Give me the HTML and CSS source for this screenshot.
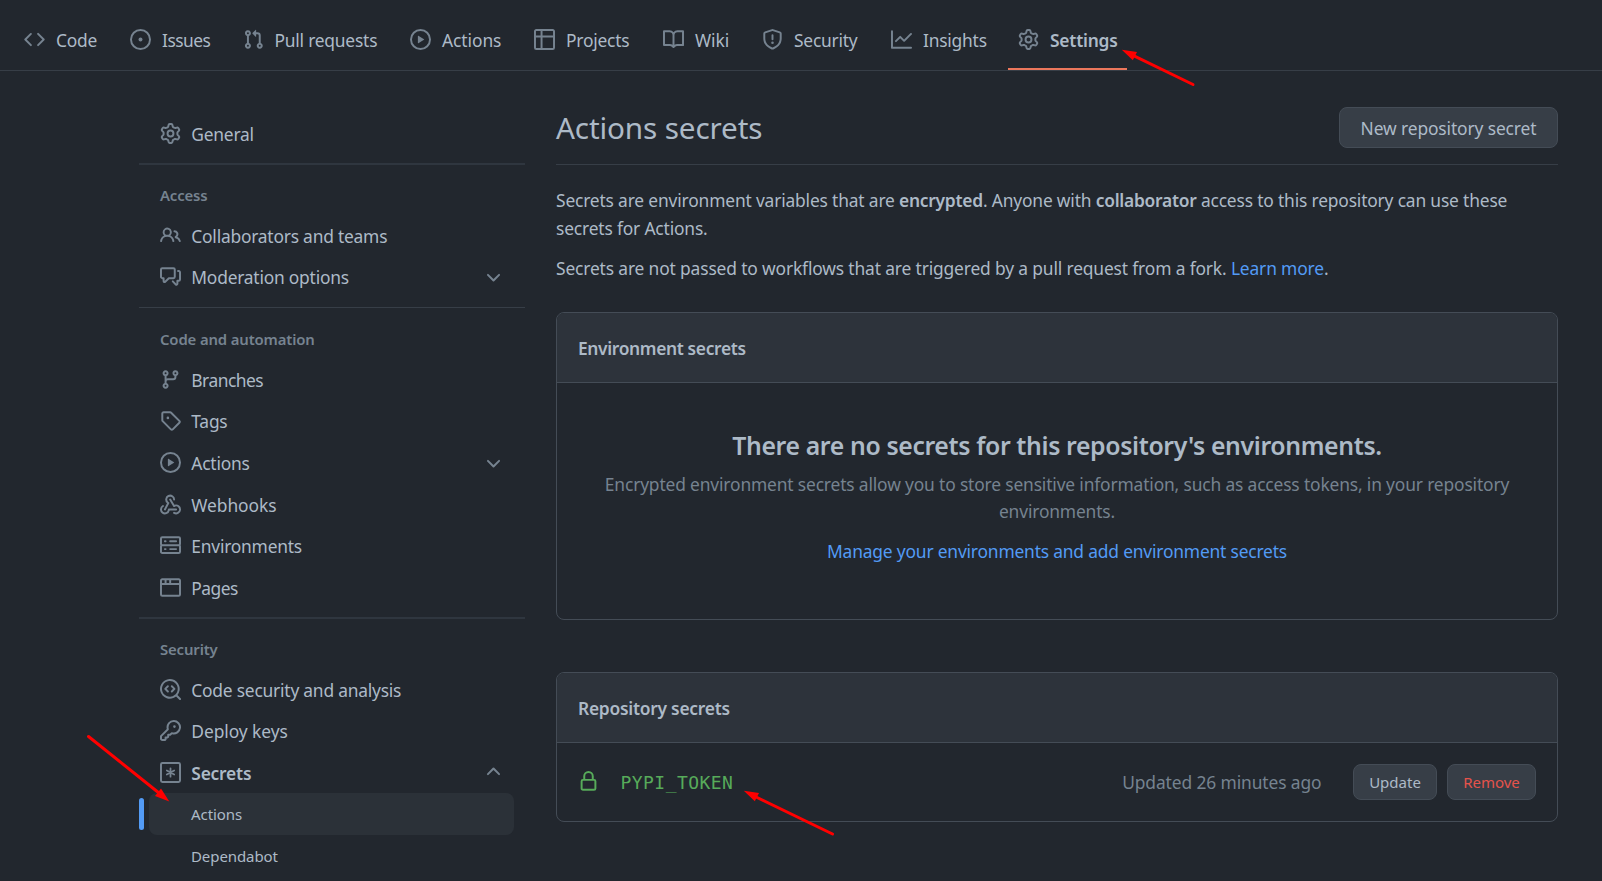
FILE: index.html
```html
<!DOCTYPE html>
<html lang="en">
<head>
<meta charset="utf-8">
<title>Actions secrets</title>
<link rel="stylesheet" href="styles.css">
</head>
<body>
<svg class="sprite" aria-hidden="true">
<symbol id="code" viewBox="0 0 16 16"><path d="M4.72 3.22a.75.75 0 011.06 1.06L2.06 8l3.72 3.72a.75.75 0 11-1.06 1.06L.47 8.53a.75.75 0 010-1.06l4.25-4.25zm6.56 0a.75.75 0 10-1.06 1.06L13.94 8l-3.72 3.72a.75.75 0 101.06 1.06l4.25-4.25a.75.75 0 000-1.06l-4.25-4.25z"/></symbol>
<symbol id="issue" viewBox="0 0 16 16"><path d="M8 9.5a1.5 1.5 0 100-3 1.5 1.5 0 000 3z"/><path d="M8 0a8 8 0 100 16A8 8 0 008 0zM1.5 8a6.5 6.5 0 1113 0 6.5 6.5 0 01-13 0z"/></symbol>
<symbol id="pull" viewBox="0 0 16 16"><path d="M7.177 3.073L9.573.677A.25.25 0 0110 .854v4.792a.25.25 0 01-.427.177L7.177 3.427a.25.25 0 010-.354zM3.75 2.5a.75.75 0 100 1.5.75.75 0 000-1.5zm-2.25.75a2.25 2.25 0 113 2.122v5.256a2.251 2.251 0 11-1.5 0V5.372A2.25 2.25 0 011.5 3.25zM11 2.5h-1V4h1a1 1 0 011 1v5.628a2.251 2.251 0 101.5 0V5A2.5 2.5 0 0011 2.5zm1 10.25a.75.75 0 111.5 0 .75.75 0 01-1.5 0zM3.75 12a.75.75 0 100 1.5.75.75 0 000-1.5z"/></symbol>
<symbol id="play" viewBox="0 0 16 16"><path d="M1.5 8a6.5 6.5 0 1113 0 6.5 6.5 0 01-13 0zM8 0a8 8 0 100 16A8 8 0 008 0zM6.379 5.227A.25.25 0 006 5.442v5.117a.25.25 0 00.379.214l4.264-2.559a.25.25 0 000-.428L6.379 5.227z"/></symbol>
<symbol id="table" viewBox="0 0 16 16"><path d="M0 1.75C0 .784.784 0 1.75 0h12.5C15.216 0 16 .784 16 1.75v12.5A1.75 1.75 0 0114.25 16H1.75A1.75 1.75 0 010 14.25V1.75zM1.5 6.5v7.75c0 .138.112.25.25.25H5v-8H1.5zM5 5H1.5V1.75a.25.25 0 01.25-.25H5V5zm1.5 1.5v8h7.75a.25.25 0 00.25-.25V6.5h-8zm8-1.5h-8V1.5h7.75a.25.25 0 01.25.25V5z"/></symbol>
<symbol id="book" viewBox="0 0 16 16"><path d="M0 1.75A.75.75 0 01.75 1h4.253c1.227 0 2.317.59 3 1.501A3.744 3.744 0 0111.006 1h4.245a.75.75 0 01.75.75v10.5a.75.75 0 01-.75.75h-4.507a2.25 2.25 0 00-1.591.659l-.622.621a.75.75 0 01-1.06 0l-.622-.621A2.25 2.25 0 005.258 13H.75a.75.75 0 01-.75-.75V1.75zm8.755 3a2.25 2.25 0 012.25-2.25H14.5v9h-3.757c-.71 0-1.4.201-1.992.572l.004-7.322zm-1.504 7.324l.004-5.073-.002-2.253A2.25 2.25 0 005.003 2.5H1.5v9h3.757a3.75 3.75 0 011.994.574z"/></symbol>
<symbol id="shield" viewBox="0 0 16 16"><path d="M7.467.133a1.75 1.75 0 011.066 0l5.25 1.68A1.75 1.75 0 0115 3.48V7c0 1.566-.32 3.182-1.303 4.682-.983 1.498-2.585 2.813-5.032 3.855a1.7 1.7 0 01-1.33 0c-2.447-1.042-4.049-2.357-5.032-3.855C1.32 10.182 1 8.566 1 7V3.48a1.75 1.75 0 011.217-1.667l5.25-1.68zm.61 1.429a.25.25 0 00-.153 0l-5.25 1.68a.25.25 0 00-.174.238V7c0 1.358.275 2.666 1.057 3.86.784 1.194 2.121 2.34 4.366 3.297a.2.2 0 00.154 0c2.245-.956 3.582-2.104 4.366-3.298C13.225 9.666 13.5 8.36 13.5 7V3.48a.25.25 0 00-.174-.237l-5.25-1.68zM9 10.5a1 1 0 11-2 0 1 1 0 012 0zm-.25-5.75a.75.75 0 10-1.5 0v3a.75.75 0 001.5 0v-3z"/></symbol>
<symbol id="graph" viewBox="0 0 16 16"><path d="M1.5 1.75a.75.75 0 00-1.5 0v12.5c0 .414.336.75.75.75h14.5a.75.75 0 000-1.5H1.5V1.75zm14.28 2.53a.75.75 0 00-1.06-1.06L10 7.94 7.53 5.47a.75.75 0 00-1.06 0L3.22 8.72a.75.75 0 001.06 1.06L7 7.06l2.47 2.47a.75.75 0 001.06 0l5.25-5.25z"/></symbol>
<symbol id="gear" viewBox="0 0 16 16"><path d="M8 0a8.2 8.2 0 0 1 .701.031C9.444.095 9.99.645 10.16 1.29l.288 1.107c.018.066.079.158.212.224.231.114.454.243.668.386.123.082.233.09.299.071l1.103-.303c.644-.176 1.392.021 1.82.63.27.385.506.792.704 1.218.315.675.111 1.422-.364 1.891l-.814.806c-.049.048-.098.147-.088.294.016.257.016.515 0 .772-.01.147.038.246.088.294l.814.806c.475.469.679 1.216.364 1.891a7.977 7.977 0 0 1-.704 1.217c-.428.61-1.176.807-1.82.63l-1.102-.302c-.067-.019-.177-.011-.3.071a5.909 5.909 0 0 1-.668.386c-.133.066-.194.158-.211.224l-.29 1.106c-.168.646-.715 1.196-1.458 1.26a8.006 8.006 0 0 1-1.402 0c-.743-.064-1.289-.614-1.458-1.26l-.289-1.106c-.018-.066-.079-.158-.212-.224a5.738 5.738 0 0 1-.668-.386c-.123-.082-.233-.09-.299-.071l-1.103.303c-.644.176-1.392-.021-1.82-.63a8.12 8.12 0 0 1-.704-1.218c-.315-.675-.111-1.422.363-1.891l.815-.806c.05-.048.098-.147.088-.294a6.214 6.214 0 0 1 0-.772c.01-.147-.038-.246-.088-.294l-.815-.806C.635 6.045.431 5.298.746 4.623a7.92 7.92 0 0 1 .704-1.217c.428-.61 1.176-.807 1.82-.63l1.102.302c.067.019.177.011.3-.071.214-.143.437-.272.668-.386.133-.066.194-.158.211-.224l.29-1.106C6.009.645 6.556.095 7.299.03 7.53.01 7.764 0 8 0Zm-.571 1.525c-.036.003-.108.036-.137.146l-.289 1.105c-.147.561-.549.967-.998 1.189-.173.086-.34.183-.5.29-.417.278-.97.423-1.529.27l-1.103-.303c-.109-.03-.175.016-.195.045-.22.312-.412.644-.573.99-.014.031-.021.11.059.19l.815.806c.411.406.562.957.53 1.456a4.709 4.709 0 0 0 0 .582c.032.499-.119 1.05-.53 1.456l-.815.806c-.081.08-.073.159-.059.19.162.346.353.677.573.989.02.03.085.076.195.046l1.102-.303c.56-.153 1.113-.008 1.53.27.161.107.328.204.501.29.447.222.85.629.997 1.189l.289 1.105c.029.109.101.143.137.146a6.6 6.6 0 0 0 1.142 0c.036-.003.108-.036.137-.146l.289-1.105c.147-.561.549-.967.998-1.189.173-.086.34-.183.5-.29.417-.278.97-.423 1.529-.27l1.103.303c.109.029.175-.016.195-.045.22-.313.411-.644.573-.99.014-.031.021-.11-.059-.19l-.815-.806c-.411-.406-.562-.957-.53-1.456a4.709 4.709 0 0 0 0-.582c-.032-.499.119-1.05.53-1.456l.815-.806c.081-.08.073-.159.059-.19a6.464 6.464 0 0 0-.573-.989c-.02-.03-.085-.076-.195-.046l-1.102.303c-.56.153-1.113.008-1.53-.27a4.44 4.44 0 0 0-.501-.29c-.447-.222-.85-.629-.997-1.189l-.289-1.105c-.029-.11-.101-.143-.137-.146a6.6 6.6 0 0 0-1.142 0ZM11 8a3 3 0 1 1-6 0 3 3 0 0 1 6 0ZM9.5 8a1.5 1.5 0 1 0-3.001.001A1.5 1.5 0 0 0 9.5 8Z"/></symbol>
<symbol id="people" viewBox="0 0 16 16"><path d="M5.5 3.5a2 2 0 100 4 2 2 0 000-4zM2 5.5a3.5 3.5 0 115.898 2.549 5.507 5.507 0 013.034 4.084.75.75 0 11-1.482.235 4.001 4.001 0 00-7.9 0 .75.75 0 01-1.482-.236A5.507 5.507 0 013.102 8.05 3.49 3.49 0 012 5.5zM11 4a.75.75 0 100 1.5 1.5 1.5 0 01.666 2.844.75.75 0 00-.416.672v.352a.75.75 0 00.574.73c1.2.289 2.162 1.2 2.522 2.372a.75.75 0 101.434-.44 5.01 5.01 0 00-2.56-3.012A3 3 0 0011 4z"/></symbol>
<symbol id="discussion" viewBox="0 0 16 16"><path d="M1.5 2.75a.25.25 0 01.25-.25h8.5a.25.25 0 01.25.25v5.5a.25.25 0 01-.25.25h-3.5a.75.75 0 00-.53.22L3.5 11.44V9.25a.75.75 0 00-.75-.75h-1a.25.25 0 01-.25-.25v-5.5zM1.75 1A1.75 1.75 0 000 2.75v5.5C0 9.216.784 10 1.75 10H2v1.543a1.457 1.457 0 002.487 1.03L7.061 10h3.189A1.75 1.75 0 0012 8.25v-5.5A1.75 1.75 0 0010.25 1h-8.5zM14.5 4.75a.25.25 0 00-.25-.25h-.5a.75.75 0 110-1.5h.5c.966 0 1.75.784 1.75 1.75v5.5A1.75 1.75 0 0114.25 12H14v1.543a1.457 1.457 0 01-2.487 1.03L9.22 12.28a.75.75 0 111.06-1.06l2.22 2.22v-2.19a.75.75 0 01.75-.75h1a.25.25 0 00.25-.25v-5.5z"/></symbol>
<symbol id="branch" viewBox="0 0 16 16"><path d="M11.75 2.5a.75.75 0 100 1.5.75.75 0 000-1.5zm-2.25.75a2.25 2.25 0 113 2.122V6A2.5 2.5 0 0110 8.5H6a1 1 0 00-1 1v1.128a2.251 2.251 0 11-1.5 0V5.372a2.25 2.25 0 111.5 0v1.836A2.492 2.492 0 016 7h4a1 1 0 001-1v-.628A2.25 2.25 0 019.5 3.25zM4.25 12a.75.75 0 100 1.5.75.75 0 000-1.5zM3.5 3.25a.75.75 0 111.5 0 .75.75 0 01-1.5 0z"/></symbol>
<symbol id="tag" viewBox="0 0 16 16"><path d="M2.5 7.775V2.75a.25.25 0 01.25-.25h5.025a.25.25 0 01.177.073l6.25 6.25a.25.25 0 010 .354l-5.025 5.025a.25.25 0 01-.354 0l-6.25-6.25a.25.25 0 01-.073-.177zm-1.5 0V2.75C1 1.784 1.784 1 2.75 1h5.025c.464 0 .91.184 1.238.513l6.25 6.25a1.75 1.75 0 010 2.474l-5.026 5.026a1.75 1.75 0 01-2.474 0l-6.25-6.25A1.75 1.75 0 011 7.775zM6 5a1 1 0 100 2 1 1 0 000-2z"/></symbol>
<symbol id="webhook" viewBox="0 0 16 16"><path d="M5.5 4.25a2.25 2.25 0 014.5 0 .75.75 0 001.5 0 3.75 3.75 0 10-6.14 2.889l-2.272 4.258a.75.75 0 001.324.706L7 7.25a.75.75 0 00-.309-1.015A2.25 2.25 0 015.5 4.25z"/><path d="M7.364 3.607a.75.75 0 011.03.257l2.608 4.349a3.75 3.75 0 11-.628 6.785.75.75 0 01.752-1.299 2.25 2.25 0 10-.033-3.88.75.75 0 01-1.03-.256L7.107 4.636a.75.75 0 01.257-1.03z"/><path d="M2.9 8.776A.75.75 0 012.625 9.8 2.25 2.25 0 106 11.75a.75.75 0 01.75-.751h5.5a.75.75 0 010 1.5H7.425a3.751 3.751 0 11-5.55-3.998.75.75 0 011.024.274z"/></symbol>
<symbol id="server" viewBox="0 0 16 16"><path d="M1.75 1A1.75 1.75 0 000 2.75v4c0 .372.116.717.314 1a1.742 1.742 0 00-.314 1v4c0 .966.784 1.75 1.75 1.75h12.5A1.75 1.75 0 0016 12.75v-4c0-.372-.116-.717-.314-1 .198-.283.314-.628.314-1v-4A1.75 1.75 0 0014.25 1H1.75zm0 7.5a.25.25 0 00-.25.25v4c0 .138.112.25.25.25h12.5a.25.25 0 00.25-.25v-4a.25.25 0 00-.25-.25H1.75zM1.5 2.75a.25.25 0 01.25-.25h12.5a.25.25 0 01.25.25v4a.25.25 0 01-.25.25H1.75a.25.25 0 01-.25-.25v-4zm5.5 2A.75.75 0 017.75 4h4.5a.75.75 0 010 1.5h-4.5A.75.75 0 017 4.75zM7.75 10a.75.75 0 000 1.5h4.5a.75.75 0 000-1.5h-4.5zM3 4.75A.75.75 0 013.75 4h.5a.75.75 0 010 1.5h-.5A.75.75 0 013 4.75zM3.75 10a.75.75 0 000 1.5h.5a.75.75 0 000-1.5h-.5z"/></symbol>
<symbol id="browser" viewBox="0 0 16 16"><path d="M0 2.75C0 1.784.784 1 1.75 1h12.5c.966 0 1.75.784 1.75 1.75v10.5A1.75 1.75 0 0114.25 15H1.75A1.75 1.75 0 010 13.25V2.75zm1.75-.25a.25.25 0 00-.25.25V4.5h2v-2H1.75zM5 2.5v2h2v-2H5zm3.5 0v2h6V2.75a.25.25 0 00-.25-.25H8.5zm6 3.5h-13v7.25c0 .138.112.25.25.25h12.5a.25.25 0 00.25-.25V6z"/></symbol>
<symbol id="codescan" viewBox="0 0 16 16"><path d="M8.47 4.97a.75.75 0 000 1.06L9.94 7.5 8.47 8.97a.75.75 0 101.06 1.06l2-2a.75.75 0 000-1.06l-2-2a.75.75 0 00-1.06 0zM6.53 6.03a.75.75 0 00-1.06-1.06l-2 2a.75.75 0 000 1.06l2 2a.75.75 0 101.06-1.06L5.06 7.5l1.47-1.47z"/><path d="M12.246 13.307a7.501 7.501 0 111.06-1.06l2.474 2.473a.75.75 0 11-1.06 1.06l-2.474-2.473zM1.5 7.5a6 6 0 1110.386 4.094.75.75 0 00-.292.293A6 6 0 011.5 7.5z"/></symbol>
<symbol id="key" viewBox="0 0 16 16"><path d="M6.5 5.5a4 4 0 112.731 3.795.75.75 0 00-.768.18L7.44 10.5H6.25a.75.75 0 00-.75.75v1.19l-.06.06H4.25a.75.75 0 00-.75.75v1.19l-.06.06H1.75a.25.25 0 01-.25-.25v-1.69l5.024-5.023a.75.75 0 00.181-.768A3.995 3.995 0 016.5 5.5zm4-5.5a5.5 5.5 0 00-5.348 6.788L.22 11.72a.75.75 0 00-.22.53v2C0 15.216.784 16 1.75 16h2a.75.75 0 00.53-.22l.5-.5a.75.75 0 00.22-.53V14h.75a.75.75 0 00.53-.22l.5-.5a.75.75 0 00.22-.53V12h.75a.75.75 0 00.53-.22l.932-.932A5.5 5.5 0 1010.5 0zm.5 6a1 1 0 100-2 1 1 0 000 2z"/></symbol>
<symbol id="secret" viewBox="0 0 16 16"><g fill="none" stroke="currentColor" stroke-width="1.5"><rect x=".75" y=".75" width="14.5" height="14.5" rx="1.1"/><path stroke-width="1.35" stroke-linecap="round" d="M8 4.8v6.4M5.2 6.4l5.6 3.2M10.8 6.4L5.2 9.6"/></g></symbol>
<symbol id="down" viewBox="0 0 16 16"><path d="M12.78 6.22a.75.75 0 010 1.06l-4.25 4.25a.75.75 0 01-1.06 0L3.22 7.28a.75.75 0 011.06-1.06L8 9.94l3.72-3.72a.75.75 0 011.06 0z"/></symbol>
<symbol id="up" viewBox="0 0 16 16"><path d="M3.22 9.78a.75.75 0 010-1.06l4.25-4.25a.75.75 0 011.06 0l4.25 4.25a.75.75 0 01-1.06 1.06L8 6.06 4.28 9.78a.75.75 0 01-1.06 0z"/></symbol>
<symbol id="lock" viewBox="0 0 16 16"><path d="M4 4v2h-.25A1.75 1.75 0 002 7.75v5.5c0 .966.784 1.75 1.75 1.75h8.5A1.75 1.75 0 0014 13.25v-5.5A1.75 1.75 0 0012.25 6H12V4a4 4 0 10-8 0zm6.5 2V4a2.5 2.5 0 10-5 0v2h5zM12 7.5h.25a.25.25 0 01.25.25v5.5a.25.25 0 01-.25.25h-8.5a.25.25 0 01-.25-.25v-5.5a.25.25 0 01.25-.25H12z"/></symbol>
</svg>

<nav class="tabs">
  <a class="tab"><svg class="icon"><use href="#code"/></svg><span class="label">Code</span></a>
  <a class="tab"><svg class="icon"><use href="#issue"/></svg><span class="label label-tight">Issues</span></a>
  <a class="tab"><svg class="icon"><use href="#pull"/></svg><span class="label">Pull requests</span></a>
  <a class="tab"><svg class="icon"><use href="#play"/></svg><span class="label label-loose">Actions</span></a>
  <a class="tab"><svg class="icon"><use href="#table"/></svg><span class="label">Projects</span></a>
  <a class="tab"><svg class="icon"><use href="#book"/></svg><span class="label label-loose">Wiki</span></a>
  <a class="tab"><svg class="icon"><use href="#shield"/></svg><span class="label">Security</span></a>
  <a class="tab"><svg class="icon"><use href="#graph"/></svg><span class="label">Insights</span></a>
  <a class="tab tab-current"><svg class="icon"><use href="#gear"/></svg><span class="label">Settings</span></a>
</nav>

<div class="layout">
  <aside class="sidebar">
    <div class="group">
      <a class="item"><svg class="icon"><use href="#gear"/></svg><span class="label">General</span></a>
    </div>
    <div class="group ruled thick">
      <h3 class="group-title">Access</h3>
      <a class="item"><svg class="icon"><use href="#people"/></svg><span class="label">Collaborators and teams</span></a>
      <a class="item"><svg class="icon"><use href="#discussion"/></svg><span class="label">Moderation options</span><svg class="icon chevron"><use href="#down"/></svg></a>
    </div>
    <div class="group ruled">
      <h3 class="group-title group-title-tall">Code and automation</h3>
      <a class="item"><svg class="icon"><use href="#branch"/></svg><span class="label label-tight">Branches</span></a>
      <a class="item"><svg class="icon"><use href="#tag"/></svg><span class="label">Tags</span></a>
      <a class="item"><svg class="icon"><use href="#play"/></svg><span class="label">Actions</span><svg class="icon chevron"><use href="#down"/></svg></a>
      <a class="item"><svg class="icon"><use href="#webhook"/></svg><span class="label label-loose">Webhooks</span></a>
      <a class="item"><svg class="icon"><use href="#server"/></svg><span class="label">Environments</span></a>
      <a class="item"><svg class="icon"><use href="#browser"/></svg><span class="label label-tight">Pages</span></a>
    </div>
    <div class="group ruled thick">
      <h3 class="group-title">Security</h3>
      <a class="item"><svg class="icon"><use href="#codescan"/></svg><span class="label">Code security and analysis</span></a>
      <a class="item"><svg class="icon"><use href="#key"/></svg><span class="label label-loose">Deploy keys</span></a>
      <a class="item item-open"><svg class="icon"><use href="#secret"/></svg><span class="label">Secrets</span><svg class="icon chevron"><use href="#up"/></svg></a>
      <a class="subitem subitem-current">Actions</a>
      <a class="subitem">Dependabot</a>
    </div>
  </aside>

  <main class="content">
    <header class="page-head">
      <h1 class="page-title">Actions secrets</h1>
      <button class="btn btn-large">New repository secret</button>
    </header>
    <p class="text intro">Secrets are environment variables that are <b>encrypted</b>. Anyone with <b>collaborator</b> access to this repository can use these<br>secrets for Actions.</p>
    <p class="text note">Secrets are not passed to workflows that are triggered by a pull request from a fork. <a class="link">Learn more</a>.</p>

    <section class="box env">
      <h2 class="box-head">Environment secrets</h2>
      <div class="blank">
        <h3 class="blank-title">There are no secrets for this repository's environments.</h3>
        <p class="blank-text">Encrypted environment secrets allow you to store sensitive information, such as access tokens, in your repository<br>environments.</p>
        <a class="link blank-link">Manage your environments and add environment secrets</a>
      </div>
    </section>

    <section class="box">
      <h2 class="box-head box-head-repo">Repository secrets</h2>
      <div class="secret">
        <svg class="icon lock"><use href="#lock"/></svg>
        <code class="secret-name">PYPI_TOKEN</code>
        <span class="updated">Updated 26 minutes ago</span>
        <button class="btn btn-update">Update</button>
        <button class="btn btn-remove">Remove</button>
      </div>
    </section>
  </main>
</div>

<svg class="arrows" viewBox="0 0 1602 881">
  <g stroke="#f00" stroke-width="3" stroke-linecap="round"><path d="M1193 84.500L1134 55.800"/><path d="M88.500 736.500L159 793"/><path d="M832.500 834L754 796"/></g>
  <g fill="#f00"><path d="M1121.800 49.700L1137 52L1132.800 60.200Z"/><path d="M169.300 801.500L155 796L161 788.500Z"/><path d="M743.800 790.700L759 793L754.800 801.300Z"/></g>
</svg>
</body>
</html>
```
FILE: styles.css
```css
* { box-sizing: border-box; }

body {
  margin: 0;
  height: 881px;
  overflow: hidden;
  position: relative;
  background: #22272e;
  color: #adbac7;
  font-family: "Noto Sans", "Open Sans", sans-serif;
  font-size: 17.4px;
}

h1, h2, h3, p { margin: 0; }
b { font-weight: 600; letter-spacing: -.25px; }

.sprite { display: none; }

.icon {
  width: 21px;
  height: 21px;
  flex: none;
  fill: currentColor;
  fill-rule: evenodd;
  color: #768390;
}

.label { padding-top: 1px; line-height: 24px; white-space: nowrap; letter-spacing: -.22px; }
.label-tight { letter-spacing: -.5px; }
.label-loose { letter-spacing: -.07px; }

/* Repository tabs */
.tabs {
  display: grid;
  grid-template-columns: 106px 112.5px 167.5px 124px 129px 99px 129px 128px 119px;
  height: 71px;
  padding-left: 13px;
  border-bottom: 1px solid #373e47;
}

.tab {
  display: flex;
  align-items: center;
  gap: 11px;
  padding: 10px 0 0 11px;
  border-bottom: 2px solid transparent;
}

.tab-current { border-bottom-color: #ec775c; font-weight: 600; padding-left: 10px; }

.layout { display: flex; gap: 31px; padding: 36px 44px 0 139px; }

/* Settings sidebar */
.sidebar { width: 386px; flex: none; padding-top: 5.700px; }
.group { padding-bottom: 8.800px; }
.ruled { border-top: 1px solid #373e47; }
.thick { border-top: 2px solid #2f363f; }

.group-title {
  height: 49.300px;
  padding: 19px 0 0 21px;
  color: #768390;
  font-size: 14.900px;
  font-weight: 600;
  line-height: 22px;
  letter-spacing: -.14px;
}

.group-title-tall { height: 50.800px; padding-top: 20px; }

.item {
  display: flex;
  align-items: center;
  gap: 10.300px;
  height: 41.660px;
  padding: 0 21px;
}

.item-open { font-weight: 600; }
.chevron { margin-left: auto; }

.subitem {
  display: flex;
  align-items: center;
  position: relative;
  height: 42px;
  margin: 0 11px 0 10px;
  padding-left: 42px;
  border-radius: 8px;
  font-size: 15px;
  letter-spacing: -.08px;
}

.subitem-current { background: #2b3138; }

.subitem-current::before {
  content: "";
  position: absolute;
  left: -10px;
  top: 5px;
  width: 5px;
  height: 32px;
  border-radius: 3px;
  background: #539bf5;
}

/* Main column */
.content { flex: 1; min-width: 0; }

.page-head {
  display: flex;
  justify-content: space-between;
  align-items: flex-start;
  height: 58px;
  border-bottom: 1px solid #373e47;
}

.page-title { font-size: 29.700px; font-weight: 400; line-height: 42px; letter-spacing: -.14px; }

.btn {
  border: 1px solid #444c56;
  border-radius: 8px;
  background: #373e47;
  color: #adbac7;
  font: 400 15px "Noto Sans", "Open Sans", sans-serif;
  height: 36px;
  padding: 0;
  white-space: nowrap;
}

.btn-large { width: 219px; height: 41px; font-size: 17.400px; letter-spacing: -.12px; }

.text { line-height: 28px; white-space: nowrap; }
.intro { margin-top: 20.500px; letter-spacing: -.17px; }
.note { margin-top: 12px; letter-spacing: -.15px; }
.link { color: #539bf5; }

.box { border: 1px solid #444c56; border-radius: 8px; }
.env { height: 308px; margin: 30px 0 52px; }

.box-head {
  height: 70px;
  padding-left: 21px;
  border-bottom: 1px solid #444c56;
  border-radius: 7px 7px 0 0;
  background: #2d333b;
  font-size: 17.400px;
  font-weight: 600;
  line-height: 71px;
  letter-spacing: -.35px;
}

.box-head-repo { letter-spacing: -.25px; }

.blank { padding-top: 42px; text-align: center; white-space: nowrap; }
.blank-title { font-size: 24.800px; font-weight: 600; line-height: 40px; letter-spacing: -.37px; }
.blank-text { margin-top: 6px; color: #768390; line-height: 27.500px; letter-spacing: -.155px; }
.blank-link { display: block; margin-top: 11px; line-height: 28px; letter-spacing: -.185px; }

.secret { display: flex; align-items: center; height: 78px; padding: 0 21px; }
.lock { color: #57ab5a; }

.secret-name {
  margin-left: 21.500px;
  padding-top: 2px;
  color: #57ab5a;
  font-family: "DejaVu Sans Mono", monospace;
  font-size: 18px;
  letter-spacing: .45px;
}

.updated { margin-left: auto; margin-right: 31.500px; color: #768390; letter-spacing: -.11px; }
.btn-update { width: 84px; margin-right: 10px; }
.btn-remove { width: 89px; color: #e5534b; }

/* Callout arrows drawn over the page */
.arrows { position: absolute; left: 0; top: 0; width: 1602px; height: 881px; pointer-events: none; }
```
